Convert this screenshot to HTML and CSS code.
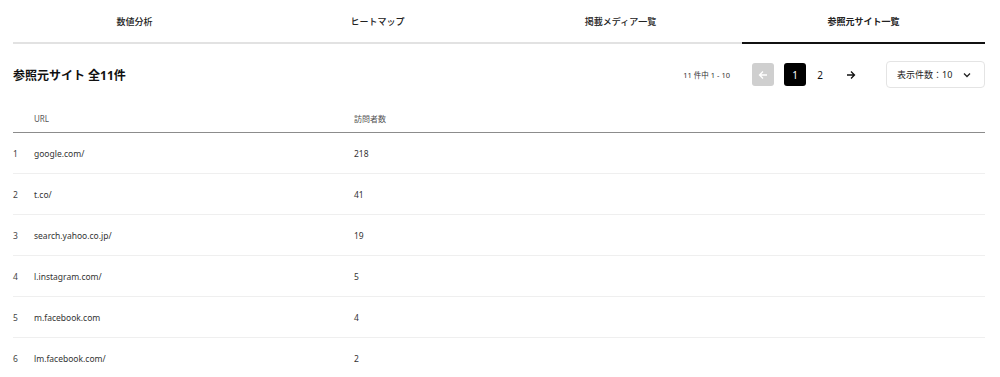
FILE: index.html
```html
<!DOCTYPE html>
<html lang="ja">

<head>
    <meta charset="UTF-8">
    <meta name="viewport" content="width=device-width, initial-scale=1.0">
    <title>参照元サイト一覧</title>
    <link rel="stylesheet" href="styles.css">
</head>

<body>
    <div class="page">
        <nav class="tabs">
            <a class="tab" href="#">数値分析</a>
            <a class="tab" href="#">ヒートマップ</a>
            <a class="tab" href="#">掲載メディア一覧</a>
            <a class="tab active" href="#">参照元サイト一覧</a>
        </nav>

        <div class="list-header">
            <h2 class="title">参照元サイト 全11件</h2>
            <div class="pager">
                <span class="pager-count">11 件中 1 - 10</span>
                <button class="page-btn prev" disabled>
                    <svg width="10" height="10" viewBox="0 0 10 10"><path d="M9 5H1.5M5 1.5L1.5 5 5 8.5" fill="none" stroke="#fff" stroke-width="1.3"/></svg>
                </button>
                <button class="page-btn current">1</button>
                <button class="page-btn">2</button>
                <button class="page-btn next">
                    <svg width="10" height="10" viewBox="0 0 10 10"><path d="M1 5h7.5M5 1.5L8.5 5 5 8.5" fill="none" stroke="#111" stroke-width="1.3"/></svg>
                </button>
            </div>
            <div class="per-page">
                <span>表示件数：10</span>
                <svg width="8" height="6" viewBox="0 0 8 6"><path d="M1 1.5l3 3 3-3" fill="none" stroke="#222" stroke-width="1.3"/></svg>
            </div>
        </div>

        <table class="sites">
            <thead>
                <tr>
                    <th class="num"></th>
                    <th class="url">URL</th>
                    <th>訪問者数</th>
                </tr>
            </thead>
            <tbody>
                <tr><td class="num">1</td><td class="url">google.com/</td><td>218</td></tr>
                <tr><td class="num">2</td><td class="url">t.co/</td><td>41</td></tr>
                <tr><td class="num">3</td><td class="url">search.yahoo.co.jp/</td><td>19</td></tr>
                <tr><td class="num">4</td><td class="url">l.instagram.com/</td><td>5</td></tr>
                <tr><td class="num">5</td><td class="url">m.facebook.com</td><td>4</td></tr>
                <tr><td class="num">6</td><td class="url">lm.facebook.com/</td><td>2</td></tr>
            </tbody>
        </table>
    </div>
</body>

</html>
```

FILE: styles.css
```css
body {
    margin: 0;
    background: #fff;
    color: #222;
    font-family: "Noto Sans", "Noto Sans CJK JP", sans-serif;
}

.page {
    width: 972px;
    margin-left: 13px;
}

.tabs {
    display: flex;
    border-bottom: 2px solid #e2e2e2;
}

.tab {
    flex: 1;
    height: 42px;
    display: flex;
    align-items: center;
    justify-content: center;
    font-size: 9px;
    font-weight: 500;
    color: #222;
    text-decoration: none;
}

.tab.active {
    font-weight: 700;
    border-bottom: 2px solid #111;
    margin-bottom: -2px;
}

.list-header {
    display: flex;
    align-items: center;
    height: 27px;
    margin-top: 17px;
}

.title {
    margin: 0;
    font-size: 12px;
    font-weight: 700;
    color: #111;
}

.pager {
    margin-left: auto;
    display: flex;
    align-items: center;
}

.pager-count {
    font-size: 7.5px;
    color: #333;
    margin-right: 22px;
}

.page-btn {
    width: 22px;
    height: 23px;
    padding: 0;
    border: none;
    border-radius: 3px;
    background: transparent;
    font-family: inherit;
    font-size: 10px;
    color: #111;
    display: flex;
    align-items: center;
    justify-content: center;
}

.page-btn.prev {
    background: #cfcfcf;
    margin-right: 10px;
}

.page-btn.current {
    background: #000;
    color: #fff;
    margin-right: 3px;
}

.page-btn.next {
    margin-left: 9px;
}

.per-page {
    width: 99px;
    height: 27px;
    box-sizing: border-box;
    margin-left: 24px;
    padding: 0 13px 0 10px;
    border: 1px solid #e4e4e4;
    border-radius: 4px;
    display: flex;
    align-items: center;
    justify-content: space-between;
    font-size: 9px;
    color: #222;
}

.sites {
    width: 100%;
    margin-top: 16px;
    border-collapse: collapse;
    font-size: 8.5px;
    color: #333;
}

.sites th {
    height: 28px;
    padding: 0;
    text-align: left;
    font-weight: 400;
    font-size: 8px;
    color: #555;
    border-bottom: 1px solid #8c8c8c;
}

.sites td {
    height: 40px;
    padding: 0;
    border-bottom: 1px solid #efefef;
}

.sites tbody tr:last-child td {
    border-bottom: none;
}

.sites .num {
    width: 21px;
    color: #444;
}

.sites .url {
    width: 320px;
}
```
